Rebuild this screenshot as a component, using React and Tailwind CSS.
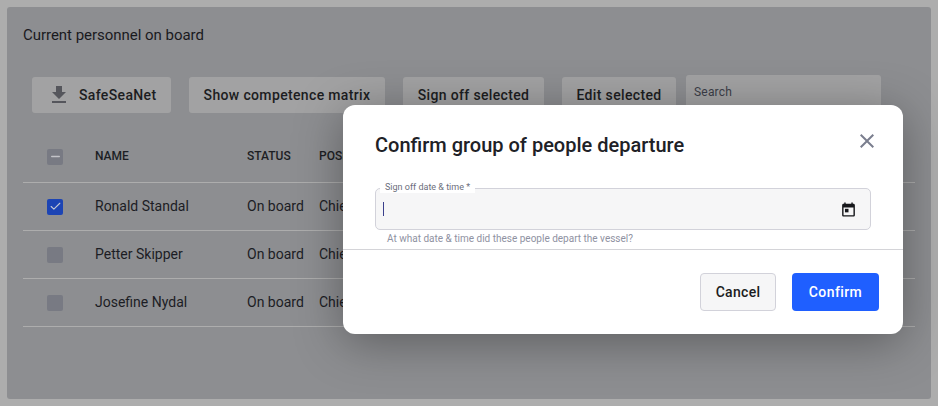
import React from 'react';
import { Check, Minus } from 'lucide-react';

const people = ['Ronald Standal', 'Petter Skipper', 'Josefine Nydal'];

function DownloadIcon() {
  return (
    <svg width="24" height="24" viewBox="0 0 24 24" fill="#55565c">
      <path d="M19 9h-4V3H9v6H5l7 7 7-7zM5 18v2h14v-2H5z" />
    </svg>
  );
}

function CloseIcon() {
  return (
    <svg width="24" height="24" viewBox="0 0 24 24" fill="#7a7e8e">
      <path d="M19 6.41L17.59 5 12 10.59 6.41 5 5 6.41 10.59 12 5 17.59 6.41 19 12 13.41 17.59 19 19 17.59 13.41 12z" />
    </svg>
  );
}

function CalendarIcon() {
  return (
    <svg width="17" height="17" viewBox="0 0 24 24" fill="#16171b">
      <path d="M19 4h-1V2h-2v2H8V2H6v2H5c-1.1 0-2 .9-2 2v14c0 1.1.9 2 2 2h14c1.1 0 2-.9 2-2V6c0-1.1-.9-2-2-2zm0 16H5V9h14v11z" />
      <path d="M7 11h5v5H7z" />
    </svg>
  );
}

function ToolbarButton({ children, className = '' }) {
  return (
    <button className={`h-9 rounded-[3px] bg-[#a2a2a3] text-sm font-medium tracking-[0.35px] text-[#1c1d21] flex items-center justify-center pb-px ${className}`}>
      {children}
    </button>
  );
}

function Box({ className = '', children }) {
  return <span className={`w-4 h-4 rounded-[2px] flex items-center justify-center ${className}`}>{children}</span>;
}

function Row({ name, selected }) {
  return (
    <div className="grid grid-cols-[72px_152px_72px_1fr] items-center h-12 border-b border-[#adadad] text-sm text-[#1c1d24]">
      <div className="pl-6">
        {selected ? (
          <Box className="bg-[#1c44b4]"><Check size={13} strokeWidth={2} className="text-[#c4c8d4]" /></Box>
        ) : (
          <Box className="bg-[#787a83]" />
        )}
      </div>
      <span className="pb-px">{name}</span>
      <span className="pb-px">On board</span>
      <span className="pb-px">Chief Officer</span>
    </div>
  );
}

export default function App() {
  return (
    <div className="relative h-screen bg-[#adadad] p-[7px] font-['Roboto',sans-serif] overflow-hidden">
      <div className="h-full rounded-[3px] bg-[#8d8e91] px-4 pt-[18px]">
        <h2 className="text-[15px] leading-5 tracking-[-0.03px] text-[#1a1a1e]">Current personnel on board</h2>

        <div className="flex items-start gap-[18px] mt-[30px] ml-[9px]">
          <ToolbarButton className="w-[139px] mt-[2px] gap-2 !justify-start pl-[15px]">
            <DownloadIcon />
            SafeSeaNet
          </ToolbarButton>
          <ToolbarButton className="w-[196px] mt-[2px]">Show competence matrix</ToolbarButton>
          <ToolbarButton className="w-[141px] mt-[2px]">Sign off selected</ToolbarButton>
          <ToolbarButton className="w-[114px] mt-[2px]">Edit selected</ToolbarButton>
          <div className="w-[195px] h-10 -ml-2 rounded-[3px] bg-[#a2a2a3] px-2 pt-2 text-xs leading-[18px] tracking-[0.2px] text-[#3c3e48]">Search</div>
        </div>

        <div className="mt-4">
          <div className="grid grid-cols-[72px_152px_72px_1fr] items-center h-[52px] border-b border-[#adadad] text-xs font-medium text-[#1c1e24]">
            <div className="pl-6">
              <Box className="bg-[#787a83]"><Minus size={13} strokeWidth={2.5} className="text-[#c2c3c8]" /></Box>
            </div>
            <span className="pb-[2px]">NAME</span>
            <span className="pb-[2px]">STATUS</span>
            <span className="pb-[2px]">POSITION</span>
          </div>
          {people.map((name, i) => (
            <Row key={name} name={name} selected={i === 0} />
          ))}
        </div>
      </div>

      {/* Departure dialog */}
      <div className="absolute left-[343px] top-[105px] w-[560px] h-[229px] rounded-xl bg-white shadow-[0_8px_48px_rgba(0,0,0,0.35)]">
        <div className="flex items-start justify-between pl-8 pr-6 pt-[26px]">
          <h1 className="text-xl leading-7 font-medium text-[#202126]">Confirm group of people departure</h1>
          <div className="mt-[-2px]"><CloseIcon /></div>
        </div>

        <div className="relative mx-8 mt-[29px] h-[42px] w-[496px] rounded-[5px] border border-[#d2d2da] bg-[#f6f6f7] flex items-center justify-between pl-[7px] pr-[13px]">
          <span className="absolute left-[4px] -top-[7px] bg-white px-[5px] text-[9px] leading-[11px] text-[#6c6e7c]">Sign off date &amp; time *</span>
          <span className="w-px h-[14px] bg-[#3a3f8c]" />
          <CalendarIcon />
        </div>
        <p className="ml-11 mt-[3px] text-[10px] leading-[12px] text-[#8f92a2]">At what date &amp; time did these people depart the vessel?</p>

        <div className="mt-[4px] border-t border-[#d4d4d8] flex justify-end gap-4 pr-6 pt-[23px]">
          <button className="w-[76px] h-[38px] pb-px rounded-[4px] border border-[#d2d2da] bg-[#f6f6f7] text-sm font-medium tracking-[0.3px] text-[#1c1d21]">Cancel</button>
          <button className="w-[87px] h-[38px] pb-px rounded-[4px] bg-[#1f5fff] text-sm font-medium tracking-[0.4px] text-white">Confirm</button>
        </div>
      </div>
    </div>
  );
}
